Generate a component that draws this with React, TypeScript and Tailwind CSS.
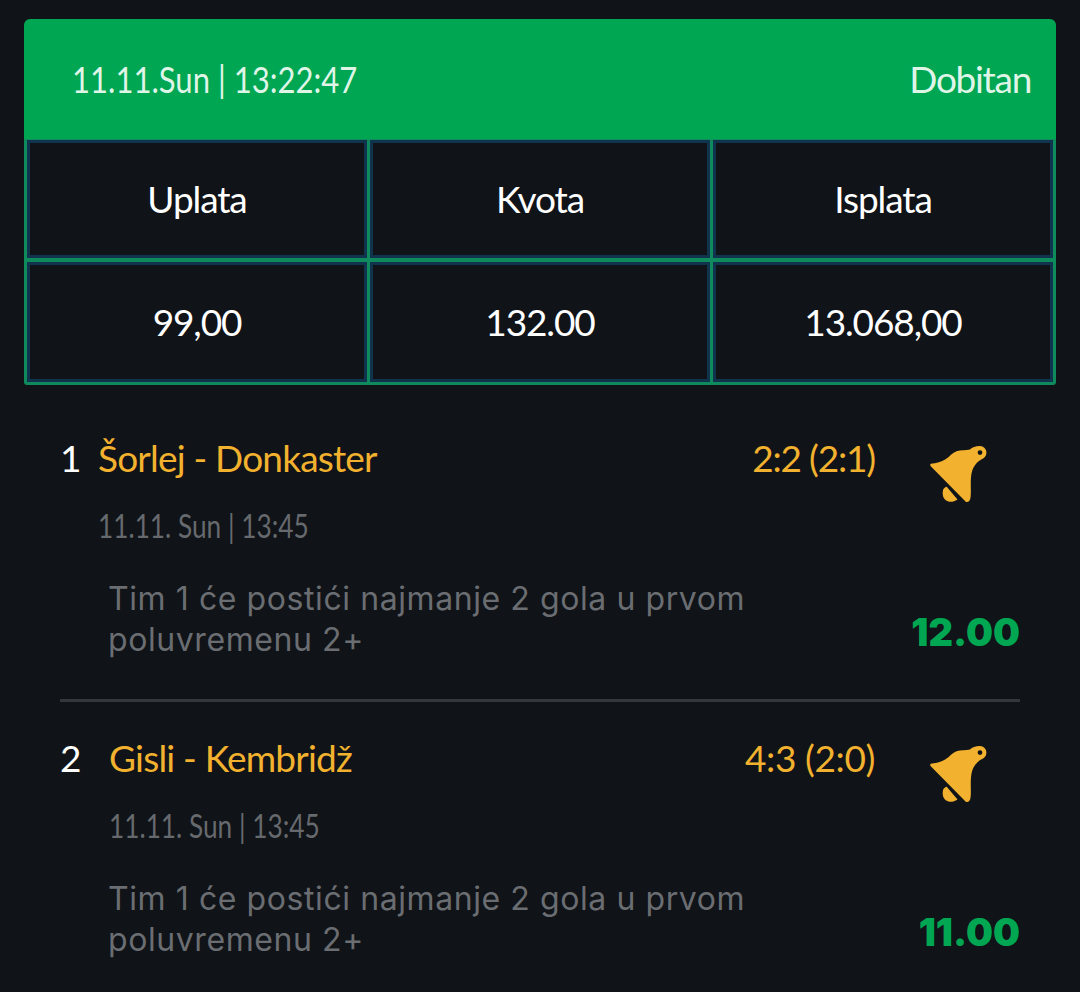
import React from 'react'

const FONT = "font-['Lato','Open_Sans',sans-serif]"

function BellIcon() {
  return (
    <svg width="60" height="60" viewBox="28 13 60 60" className="shrink-0 mt-[34px]">
      <path
        fillRule="evenodd"
        fill="#f2b12e"
        d="M30.7 32.7 C36.5 32.3 41.5 31 45.5 28.3 C49.5 25.5 52.5 21.8 56.5 20.2 C60.5 18.8 66 19.6 70 18.6 C72 16.2 76 14.9 80 15 C83.6 15.1 86.4 18 86.4 21.7 C86.4 24.8 84.3 27.2 81.7 28.3 C78.5 29.8 75.5 33 73.5 36.5 C71.5 40 71 45 70.8 50 C70.6 56 71.2 61 70.6 66 C70.2 70 68.5 71.6 66 71 L31 35.5 C30 34.5 30 33.5 30.7 32.7 Z M80 19.2 A2.4 2.4 0 1 0 80 24 A2.4 2.4 0 1 0 80 19.2 Z"
      />
      <path
        fill="#f2b12e"
        d="M46.7 55.7 L57.5 68.5 C53 71.5 48.5 71.5 45.5 69 C42.5 66.5 42.2 62 43.2 58.5 C44 57 45.3 56 46.7 55.7 Z"
      />
    </svg>
  )
}

function Cell({ text }: { text: string }) {
  return (
    <div className="flex items-center justify-center border-[3px] border-[#10344e] bg-[#101317] text-[37px] text-white tracking-[-1.1px]">
      {text}
    </div>
  )
}

const rows = [
  { no: '1', title: 'Šorlej - Donkaster', score: '2:2 (2:1)', date: '11.11. Sun | 13:45', odds: '12.00' },
  { no: '2', title: 'Gisli - Kembridž', score: '4:3 (2:0)', date: '11.11. Sun | 13:45', odds: '11.00' },
]

export default function App() {
  return (
    <div className={`${FONT} w-[1080px] h-[992px] overflow-hidden bg-[#101317] pt-[19px] px-[24px]`}>
      {/* Ticket header */}
      <div className="rounded-t-[6px] rounded-b-[3px] overflow-hidden">
        <div className="flex items-center justify-between h-[120px] bg-[#00a651] pl-[48px] pr-[25px] text-[37px] text-[#dff5e8]">
          <span className="inline-block origin-left scale-x-[0.84]">11.11.Sun | 13:22:47</span>
          <span className="tracking-[-1.3px]">Dobitan</span>
        </div>
        <div className="grid grid-cols-3 grid-rows-[118px_120px] gap-x-[3px] gap-y-[4px] bg-[#0e8a5c] px-[3px] pt-[1px] pb-[3px]">
          <Cell text="Uplata" />
          <Cell text="Kvota" />
          <Cell text="Isplata" />
          <Cell text="99,00" />
          <Cell text="132.00" />
          <Cell text="13.068,00" />
        </div>
      </div>

      {/* Matches */}
      <div className="px-[36px]">
        {rows.map((r, i) => (
          <div key={r.no} className={i === 0 ? 'h-[317px] border-b-[3px] border-[#34373c] pt-[44px]' : 'pt-[27px]'}>
            <div className="flex items-center h-[56px] text-[37px] leading-none">
              <span className="w-[38px] text-white">{r.no}</span>
              <span className={`${i === 0 ? '' : 'ml-[11px]'} text-[#f2b12e] tracking-[-0.8px]`}>{r.title}</span>
              <span className={`${i === 0 ? 'tracking-[-1.2px]' : 'tracking-[-0.4px]'} ml-auto text-[#f2b12e]`}>{r.score}</span>
              <div className="ml-[53px] mr-[32px]">
                <BellIcon />
              </div>
            </div>
            <div className={`${i === 0 ? 'pl-[38px]' : 'pl-[49px]'} mt-[19px] text-[32px] leading-[44px] text-[#66696d]`}>
              <span className="inline-block origin-left scale-x-[0.82]">{r.date}</span>
            </div>
            <div className="flex items-end justify-between mt-[30px]">
              <p className="pl-[48px] w-[730px] font-['Inter',sans-serif] text-[32px] leading-[41px] tracking-[0.58px] text-[#6a6d71]">
                Tim 1 će postići najmanje 2 gola u prvom poluvremenu 2+
              </p>
              <span className="font-['Inter',sans-serif] text-[38px] leading-[44px] font-black text-[#00a651] mb-[6px]">{r.odds}</span>
            </div>
          </div>
        ))}
      </div>
    </div>
  )
}
